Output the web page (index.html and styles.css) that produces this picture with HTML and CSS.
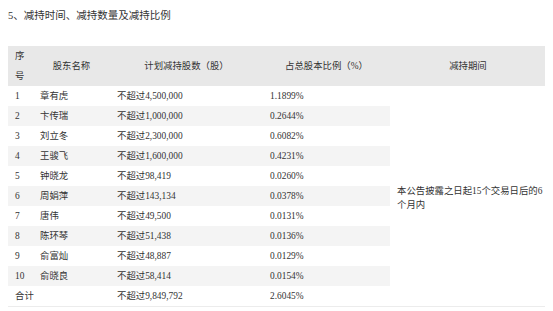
FILE: index.html
```html
<!DOCTYPE html>
<html lang="zh-CN">
    <head>
        <meta charset="UTF-8" />
        <meta name="viewport" content="width=device-width, initial-scale=1.0" />
        <title>减持计划</title>
        <link rel="stylesheet" href="styles.css">
    </head>
    <body>
        <h4 class="section-title">5、减持时间、减持数量及减持比例</h4>
        <table class="plan-table">
            <colgroup>
                <col class="col-no" />
                <col class="col-name" />
                <col class="col-shares" />
                <col class="col-ratio" />
                <col class="col-period" />
            </colgroup>
            <thead>
                <tr>
                    <th>序号</th>
                    <th>股东名称</th>
                    <th>计划减持股数（股）</th>
                    <th>占总股本比例（%）</th>
                    <th>减持期间</th>
                </tr>
            </thead>
            <tbody>
                <tr>
                    <td>1</td>
                    <td>章有虎</td>
                    <td>不超过4,500,000</td>
                    <td>1.1899%</td>
                    <td class="period" rowspan="11">本公告披露之日起15个交易日后的6个月内</td>
                </tr>
                <tr>
                    <td>2</td>
                    <td>卞传瑞</td>
                    <td>不超过1,000,000</td>
                    <td>0.2644%</td>
                </tr>
                <tr>
                    <td>3</td>
                    <td>刘立冬</td>
                    <td>不超过2,300,000</td>
                    <td>0.6082%</td>
                </tr>
                <tr>
                    <td>4</td>
                    <td>王骏飞</td>
                    <td>不超过1,600,000</td>
                    <td>0.4231%</td>
                </tr>
                <tr>
                    <td>5</td>
                    <td>钟晓龙</td>
                    <td>不超过98,419</td>
                    <td>0.0260%</td>
                </tr>
                <tr>
                    <td>6</td>
                    <td>周娟萍</td>
                    <td>不超过143,134</td>
                    <td>0.0378%</td>
                </tr>
                <tr>
                    <td>7</td>
                    <td>唐伟</td>
                    <td>不超过49,500</td>
                    <td>0.0131%</td>
                </tr>
                <tr>
                    <td>8</td>
                    <td>陈环琴</td>
                    <td>不超过51,438</td>
                    <td>0.0136%</td>
                </tr>
                <tr>
                    <td>9</td>
                    <td>俞富灿</td>
                    <td>不超过48,887</td>
                    <td>0.0129%</td>
                </tr>
                <tr>
                    <td>10</td>
                    <td>俞晓良</td>
                    <td>不超过58,414</td>
                    <td>0.0154%</td>
                </tr>
                <tr>
                    <td colspan="2">合计</td>
                    <td>不超过9,849,792</td>
                    <td>2.6045%</td>
                </tr>
            </tbody>
        </table>
    </body>
</html>
```

FILE: styles.css
```css
body {
    font-family: "Liberation Serif", "Noto Sans CJK SC", serif;
    margin: 8px;
    padding: 0;
    background-color: #fff;
    color: #333;
}
.section-title {
    font-size: 10.5px;
    font-weight: normal;
    line-height: 14px;
    margin: 1px 0 23px;
}
.plan-table {
    width: 538px;
    table-layout: fixed;
    border-collapse: collapse;
    font-size: 9.4px;
    border-bottom: 1px solid #ececec;
}
.col-no {
    width: 25px;
}
.col-name {
    width: 77px;
}
.col-shares {
    width: 153px;
}
.col-ratio {
    width: 127px;
}
.col-period {
    width: 156px;
}
.plan-table th,
.plan-table td {
    padding: 0 7px;
    line-height: 20px;
    vertical-align: middle;
}
.plan-table th {
    background-color: #e8e8e8;
    font-weight: normal;
    text-align: center;
}
.plan-table th:first-child {
    text-align: left;
}
.plan-table td {
    text-align: left;
}
.plan-table tbody tr:nth-child(even) td {
    background-color: #f4f4f4;
}
.plan-table td.period {
    padding: 4px 0 0 7px;
    line-height: 14px;
    background-color: #fff;
}
```
